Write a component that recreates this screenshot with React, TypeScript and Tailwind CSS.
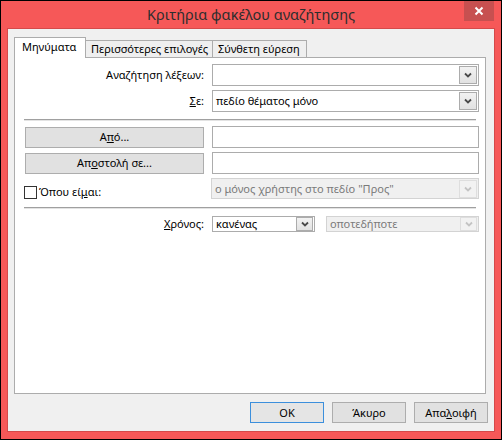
import React from "react";

function Chevron({ disabled = false }: { disabled?: boolean }) {
  return (
    <svg width="8" height="6" viewBox="0 0 8 6">
      <path
        d="M1 1.5 L4 4.5 L7 1.5"
        fill="none"
        stroke={disabled ? "#c4c4c4" : "#4a4a4a"}
        strokeWidth="1.8"
      />
    </svg>
  );
}

function Combo({
  value = "",
  disabled = false,
  short = false,
  className = "",
}: {
  value?: string;
  disabled?: boolean;
  short?: boolean;
  className?: string;
}) {
  return (
    <div
      className={`flex items-center border ${
        disabled ? "border-[#d3d3d3] bg-[#f0f0f0] text-[#7a7a7a]" : "border-[#acacac] bg-white text-black"
      } ${short ? "h-[16px]" : "h-[22px]"} ${className}`}
    >
      <span className="flex-1 pl-[3px] whitespace-nowrap overflow-hidden leading-[14px]">{value}</span>
      <div
        className={`flex items-center justify-center mr-px border ${
          disabled
            ? "border-[#dedede] bg-[#f2f2f2]"
            : "border-[#acacac] bg-gradient-to-b from-[#f2f2f2] to-[#e2e2e2]"
        } ${short ? "w-[17px] h-[14px]" : "w-[18px] h-[18px]"}`}
      >
        <Chevron disabled={disabled} />
      </div>
    </div>
  );
}

function PushButton({ children, className = "" }: { children: React.ReactNode; className?: string }) {
  return (
    <button
      type="button"
      className={`h-[21px] border border-[#adadad] bg-[#e1e1e1] text-black text-[11px] leading-[14px] whitespace-nowrap ${className}`}
    >
      {children}
    </button>
  );
}

export default function App() {
  return (
    <div className="w-[502px] h-[440px] border border-black bg-[#f65858] flex flex-col font-['Noto_Sans',sans-serif] text-[11px] text-black">
      <div className="relative h-[27px] flex items-center justify-center">
        <span className="text-[14.5px] text-[#2e2e2e] leading-[18px] pb-[1px]">Κριτήρια φακέλου αναζήτησης</span>
        <div className="absolute right-[7px] top-0 w-[30px] h-[20px] bg-[#c75050] flex items-center justify-center">
          <svg width="10" height="10" viewBox="0 0 10 10">
            <path d="M1.5 1.5 L8.5 8.5 M8.5 1.5 L1.5 8.5" stroke="#fff" strokeWidth="2" fill="none" />
          </svg>
        </div>
      </div>

      <div className="mx-[6px] h-[404px] border border-[#d44a4a] bg-[#f0f0f0] flex flex-col">
        <div className="flex items-end pl-[6px] pt-[8px] whitespace-nowrap">
          <div className="relative z-10 w-[72px] h-[21px] -mb-px border border-b-0 border-[#acacac] bg-white pl-[7px] pb-[2px] flex items-center">
            Μηνύματα
          </div>
          <div className="-ml-px w-[128px] h-[17px] border border-b-0 border-[#acacac] bg-[#efefef] flex items-center pl-[5px]">
            Περισσότερες επιλογές
          </div>
          <div className="-ml-px w-[95px] h-[17px] border border-b-0 border-[#acacac] bg-[#efefef] flex items-center pl-[5px]">
            Σύνθετη εύρεση
          </div>
        </div>

        <div className="ml-[6px] w-[472px] h-[337px] border border-[#acacac] bg-white flex flex-col pl-[10px] pr-[6px] pt-[6px]">
          <div className="flex items-center gap-[8px]">
            <div className="w-[179px] text-right">Αναζήτηση λέξεων:</div>
            <Combo className="flex-1" />
          </div>
          <div className="flex items-center gap-[8px] mt-[4px]">
            <div className="w-[179px] text-right">
              <span className="underline">Σ</span>ε:
            </div>
            <Combo className="flex-1" value="πεδίο θέματος μόνο" />
          </div>

          <div className="ml-[-1px] mr-[3px] mt-[7px] border-t border-[#a0a0a0] border-b border-b-[#e3e3e3]" />

          <div className="flex items-center gap-[8px] mt-[5px] h-[22px]">
            <PushButton className="w-[179px]">
              Α<span className="underline">π</span>ό...
            </PushButton>
            <div className="flex-1 h-[22px] border border-[#acacac] bg-white" />
          </div>
          <div className="flex items-center gap-[8px] mt-[4px] h-[22px]">
            <PushButton className="w-[179px]">
              Απ<span className="underline">ο</span>στολή σε...
            </PushButton>
            <div className="flex-1 h-[22px] border border-[#acacac] bg-white" />
          </div>
          <div className="flex items-start gap-[8px] mt-[4px] h-[21px]">
            <div className="w-[179px] flex items-center -ml-px pt-[7px]">
              <div className="w-[13px] h-[13px] shrink-0 border border-[#333] bg-white" />
              <span className="ml-[2px] leading-[14px]">
                Όπου εί<span className="underline">μ</span>αι:
              </span>
            </div>
            <Combo className="flex-1 !h-[21px]" value={'ο μόνος χρήστης στο πεδίο "Προς"'} disabled />
          </div>

          <div className="ml-[-1px] mr-[3px] mt-[8px] border-t border-[#a0a0a0] border-b border-b-[#e3e3e3]" />

          <div className="flex items-center gap-[8px] mt-[7px]">
            <div className="w-[179px] text-right">
              <span className="underline">Χ</span>ρόνος:
            </div>
            <div className="flex-1 flex items-center gap-[11px]">
              <Combo className="w-[103px]" value="κανένας" short />
              <Combo className="flex-1" value="οποτεδήποτε" short disabled />
            </div>
          </div>
        </div>

        <div className="flex justify-end gap-[8px] pr-[6px] mt-[8px]">
          <PushButton className="w-[74px] !border-[#3c8fdc] !bg-[#e5e5e5]">OK</PushButton>
          <PushButton className="w-[74px]">Άκυρο</PushButton>
          <PushButton className="w-[74px]">
            Απα<span className="underline">λ</span>οιφή
          </PushButton>
        </div>
      </div>
    </div>
  );
}
